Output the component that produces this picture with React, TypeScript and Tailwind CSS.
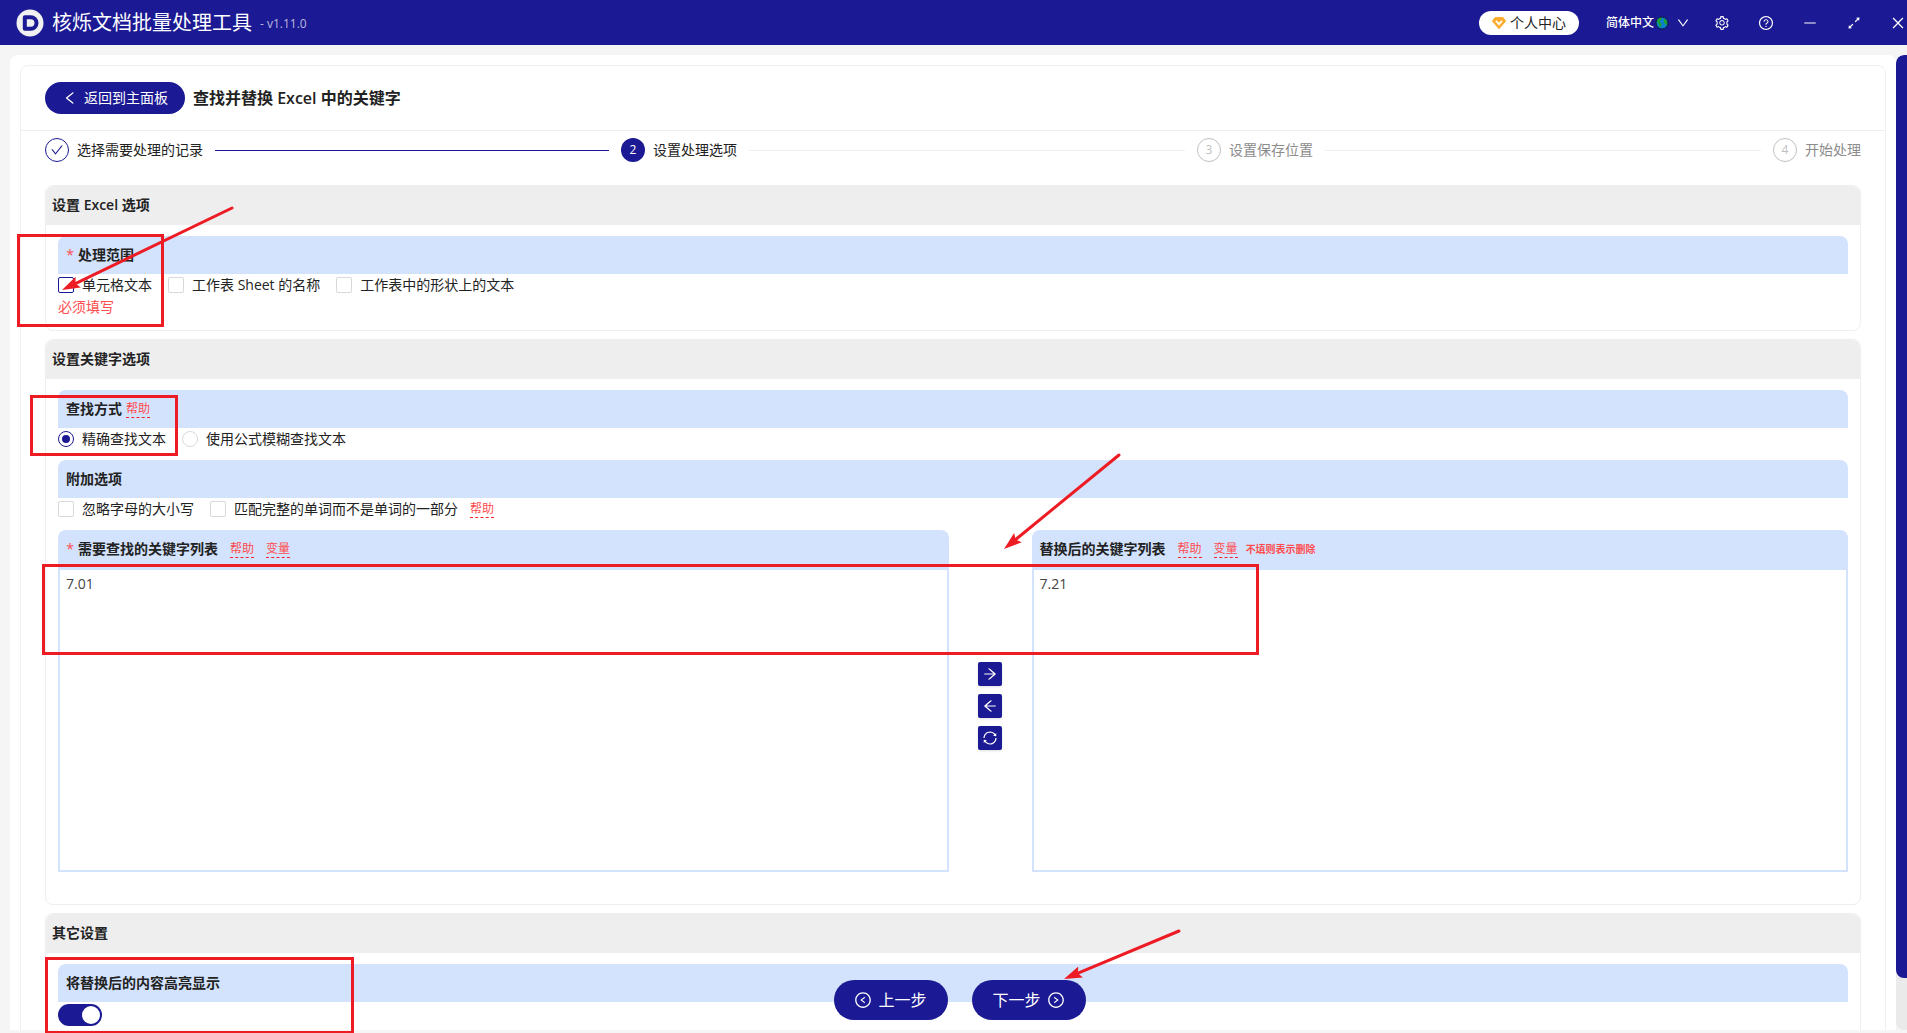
import { useState } from 'react';
import type { InputHTMLAttributes, ReactNode } from 'react';
import {
  AiOutlineArrowLeft,
  AiOutlineArrowRight,
  AiOutlineArrowsAlt,
  AiOutlineCheck,
  AiOutlineClose,
  AiOutlineDown,
  AiOutlineLeft,
  AiOutlineLeftCircle,
  AiOutlineMinus,
  AiOutlineQuestionCircle,
  AiOutlineRightCircle,
  AiOutlineSetting,
  AiOutlineSync,
} from 'react-icons/ai';

const steps = ['选择需要处理的记录', '设置处理选项', '设置保存位置', '开始处理'];
const currentStep = 1;

function Logo() {
  return (
    <svg viewBox="0 0 28 28" className="size-7" aria-hidden="true">
      <circle cx="14" cy="14" r="13.5" fill="#f0f0f0" />
      <path
        d="M8.8 8.3h6a5.7 5.7 0 0 1 0 11.4h-6z"
        fill="none"
        stroke="#1b1993"
        strokeWidth="4"
        strokeLinejoin="round"
      />
    </svg>
  );
}

function MemberIcon() {
  return (
    <svg viewBox="0 0 14 14" className="size-3.5" aria-hidden="true">
      <path d="M3 1.5h8l2.6 3.7L7 12.8.4 5.2z" fill="#fbac2e" stroke="#fbac2e" strokeLinejoin="round" />
      <path d="M4.4 5.4L7 8.2l2.6-2.8" fill="none" stroke="#fff" strokeWidth="1.7" strokeLinecap="round" />
    </svg>
  );
}

function GlobeIcon() {
  return (
    <svg viewBox="0 0 14 14" className="ml-px size-3.5" aria-hidden="true">
      <circle cx="7" cy="7" r="6" fill="#0b7fd0" stroke="#0a1f33" strokeWidth="1" />
      <path d="M2 4.2C3.4 2 5.4 1.4 6.8 1.8L6.4 3.6 4.6 5l.2 1.2 1.6 1 .2 1.6-1.4 2.8C4 11 4.4 9 3.2 7.6z" fill="#1fa32c" />
      <path d="M9.2 2.6l2.2 1.8.8 2.8-1.2 2.2-1.2-1.8-1.2-1.8z" fill="#1fa32c" />
    </svg>
  );
}

function TitleBar() {
  return (
    <header className="flex h-[45px] shrink-0 items-center justify-between bg-[#1b1993] pr-px pl-4 text-white">
      <div className="flex items-center">
        <Logo />
        <h1 className="ml-2 text-xl">核烁文档批量处理工具</h1>
        <span className="ml-2 pt-0.5 text-xs text-white/70">- v1.11.0</span>
      </div>
      <div className="flex items-center">
        <button className="flex h-6 w-[100px] items-center justify-center gap-1 rounded-full bg-white text-sm text-[#222]">
          <MemberIcon />
          个人中心
        </button>
        <button className="ml-[27px] flex items-center text-xs font-medium">
          简体中文
          <GlobeIcon />
          <AiOutlineDown className="ml-[7px] size-3.5" />
        </button>
        <div className="ml-6 flex items-center gap-7">
          <button aria-label="设置"><AiOutlineSetting className="size-4" /></button>
          <button aria-label="帮助"><AiOutlineQuestionCircle className="size-4" /></button>
          <button aria-label="最小化"><AiOutlineMinus className="size-4" /></button>
          <button aria-label="还原"><AiOutlineArrowsAlt className="size-4" /></button>
          <button aria-label="关闭"><AiOutlineClose className="size-4" /></button>
        </div>
      </div>
    </header>
  );
}

function StepMark({ index }: { index: number }) {
  if (index < currentStep) {
    return (
      <span className="flex size-6 items-center justify-center rounded-full border border-[#1b1993] text-[#1b1993]">
        <AiOutlineCheck className="size-3.5" />
      </span>
    );
  }
  return (
    <span
      className={`flex size-6 items-center justify-center rounded-full text-xs ${
        index === currentStep ? 'bg-[#1b1993] text-white' : 'border border-[#bfbfbf] text-[#bfbfbf]'
      }`}
    >
      {index + 1}
    </span>
  );
}

function Steps() {
  return (
    <ol className="flex text-sm">
      {steps.map((title, i) => {
        const last = i === steps.length - 1;
        return (
          <li key={title} className={`flex h-6 items-center ${last ? '' : 'flex-1 pr-3'}`}>
            <StepMark index={i} />
            <span className={`ml-2 ${i > currentStep ? 'text-[#8c8c8c]' : 'text-[#222]'}`}>{title}</span>
            {!last && (
              <span className={`ml-3 h-px flex-1 ${i < currentStep ? 'bg-[#1b1993]' : 'bg-[#f0f0f0]'}`} />
            )}
          </li>
        );
      })}
    </ol>
  );
}

function Section({ title, className = '', children }: { title: string; className?: string; children: ReactNode }) {
  return (
    <section className="rounded-lg border border-[#eee]">
      <h3 className="flex h-[39px] items-center rounded-t-lg bg-[#eee] px-1.5 pb-0.5 text-sm font-semibold">{title}</h3>
      <div className={`px-3 pt-[11px] ${className}`}>{children}</div>
    </section>
  );
}

function FieldBar({ children }: { children: ReactNode }) {
  return (
    <div className="flex h-[38px] items-center rounded-t-lg bg-[#d3e3fd] px-2 text-sm font-semibold">{children}</div>
  );
}

function Required() {
  return <span className="mr-1 w-2 text-center font-normal text-[#ff4d4f]">*</span>;
}

function HintLink({ className = '', children }: { className?: string; children: ReactNode }) {
  return (
    <a href="#" className={`border-b border-dashed border-[#f5222d] text-xs leading-4 font-normal text-[#ff4d4f] ${className}`}>
      {children}
    </a>
  );
}

interface OptionProps extends InputHTMLAttributes<HTMLInputElement> {
  label: string;
  active?: boolean;
}

function Checkbox({ label, active, ...rest }: OptionProps) {
  return (
    <label className="flex items-center gap-2">
      <input
        type="checkbox"
        className={`size-4 appearance-none rounded-xs border bg-white checked:bg-[#1b1993] ${
          active ? 'border-[#1b1993]' : 'border-[#d9d9d9]'
        }`}
        {...rest}
      />
      {label}
    </label>
  );
}

function Radio({ label, ...rest }: OptionProps) {
  return (
    <label className="flex items-center gap-2">
      <input
        type="radio"
        className="size-4 appearance-none rounded-full border border-[#d9d9d9] bg-white bg-clip-content p-[3px] checked:border-[#1b1993] checked:bg-[#1b1993]"
        {...rest}
      />
      {label}
    </label>
  );
}

function KeywordBox({ label, value, onChange }: { label: string; value: string; onChange: (v: string) => void }) {
  return (
    <textarea
      aria-label={label}
      value={value}
      onChange={(e) => onChange(e.target.value)}
      className="block h-[304px] w-full resize-none border-2 border-[#d3e3fd] bg-white px-1.5 py-1 text-sm text-[#444] outline-none"
    />
  );
}

function SquareButton({ label, onClick, children }: { label: string; onClick: () => void; children: ReactNode }) {
  return (
    <button
      aria-label={label}
      onClick={onClick}
      className="flex size-6 items-center justify-center rounded-xs bg-[#1b1993] text-white shadow-sm"
    >
      {children}
    </button>
  );
}

// hand-drawn guide marks laid over the whole window
function Annotations() {
  const boxes = [
    [18.5, 235.5, 144, 90],
    [31.5, 396.5, 145, 58],
    [43.5, 565.5, 1214, 88],
    [46.5, 958.5, 306, 74],
  ];
  const arrows = [
    [232, 208, 62, 290],
    [1119, 455, 1004, 549],
    [1179, 931, 1064, 979],
  ];
  return (
    <svg className="pointer-events-none absolute inset-0 size-full" aria-hidden="true">
      <defs>
        <marker id="head" markerUnits="userSpaceOnUse" markerWidth="20" markerHeight="14" refX="18" refY="7" orient="auto">
          <path d="M18 7L0 1l3 6-3 6z" fill="#ed1c24" />
        </marker>
      </defs>
      {boxes.map(([x, y, w, h]) => (
        <rect key={y} x={x} y={y} width={w} height={h} fill="none" stroke="#ed1c24" strokeWidth="3" />
      ))}
      {arrows.map(([x1, y1, x2, y2]) => {
        // the shaft stops inside the head so that the tip stays sharp
        const len = Math.hypot(x2 - x1, y2 - y1);
        const k = (len - 12) / len;
        return (
          <g key={x1} stroke="#ed1c24" strokeLinecap="round">
            <line x1={x1} y1={y1} x2={x1 + (x2 - x1) * k} y2={y1 + (y2 - y1) * k} strokeWidth="3" />
            <line x1={x1} y1={y1} x2={x2} y2={y2} strokeWidth="0" markerEnd="url(#head)" />
          </g>
        );
      })}
    </svg>
  );
}

export default function App() {
  const [mode, setMode] = useState('exact');
  const [search, setSearch] = useState('7.01');
  const [replacement, setReplacement] = useState('7.21');
  const [highlight, setHighlight] = useState(true);

  return (
    <div className="relative flex h-screen flex-col overflow-hidden bg-[#f5f5f5] font-['Open_Sans','Noto_Sans_CJK_SC',sans-serif] text-[#222]">
      <TitleBar />

      <div className="flex min-h-0 flex-1 pt-2.5 pb-[3px] pl-2.5">
        <main className="flex-1 overflow-hidden rounded-t-lg bg-white p-2.5">
          <div className="rounded-lg border border-[#f0f0f0]">
            <div className="flex h-[65px] items-center gap-2 border-b border-[#f0f0f0] px-6">
              <button className="flex h-8 w-[140px] items-center justify-center gap-1.5 rounded-full bg-[#1b1993] text-sm text-white">
                <AiOutlineLeft className="size-4" />
                返回到主面板
              </button>
              <h2 className="text-base font-semibold">查找并替换 Excel 中的关键字</h2>
            </div>

            <div className="px-6 pt-[7px] pb-6">
              <Steps />

              <div className="mt-[23px] flex flex-col gap-2 text-sm">
                <Section title="设置 Excel 选项" className="pb-3">
                  <FieldBar>
                    <Required />
                    处理范围
                  </FieldBar>
                  <div className="flex h-[22px] items-center gap-4">
                    <Checkbox label="单元格文本" active />
                    <Checkbox label="工作表 Sheet 的名称" />
                    <Checkbox label="工作表中的形状上的文本" />
                  </div>
                  <p className="h-[22px] leading-[22px] text-[#ff4d4f]">必须填写</p>
                </Section>

                <Section title="设置关键字选项" className="pb-8">
                  <FieldBar>
                    查找方式
                    <HintLink className="ml-1">帮助</HintLink>
                  </FieldBar>
                  <div className="flex h-[22px] items-center gap-4">
                    <Radio name="mode" label="精确查找文本" checked={mode === 'exact'} onChange={() => setMode('exact')} />
                    <Radio name="mode" label="使用公式模糊查找文本" checked={mode === 'fuzzy'} onChange={() => setMode('fuzzy')} />
                  </div>

                  <div className="mt-2.5">
                    <FieldBar>附加选项</FieldBar>
                    <div className="flex h-[22px] items-center gap-4">
                      <Checkbox label="忽略字母的大小写" />
                      <div className="flex items-center gap-3">
                        <Checkbox label="匹配完整的单词而不是单词的一部分" />
                        <HintLink>帮助</HintLink>
                      </div>
                    </div>
                  </div>

                  <div className="mt-2.5 grid grid-cols-[12fr_83px_11fr]">
                    <div>
                      <FieldBar>
                        <Required />
                        需要查找的关键字列表
                        <HintLink className="ml-3">帮助</HintLink>
                        <HintLink className="ml-3">变量</HintLink>
                      </FieldBar>
                      <KeywordBox label="需要查找的关键字列表" value={search} onChange={setSearch} />
                    </div>
                    <div className="flex flex-col items-center justify-center gap-2 pt-2.5">
                      <SquareButton label="复制到右侧" onClick={() => setReplacement(search)}>
                        <AiOutlineArrowRight className="size-4" />
                      </SquareButton>
                      <SquareButton label="复制到左侧" onClick={() => setSearch(replacement)}>
                        <AiOutlineArrowLeft className="size-4" />
                      </SquareButton>
                      <SquareButton
                        label="互换"
                        onClick={() => {
                          setSearch(replacement);
                          setReplacement(search);
                        }}
                      >
                        <AiOutlineSync className="size-4" />
                      </SquareButton>
                    </div>
                    <div>
                      <FieldBar>
                        替换后的关键字列表
                        <HintLink className="ml-3">帮助</HintLink>
                        <HintLink className="ml-3">变量</HintLink>
                        <span className="ml-2 text-[10px] text-[#ff4d4f]">不填则表示删除</span>
                      </FieldBar>
                      <KeywordBox label="替换后的关键字列表" value={replacement} onChange={setReplacement} />
                    </div>
                  </div>
                </Section>

                <Section title="其它设置" className="pb-8">
                  <FieldBar>将替换后的内容高亮显示</FieldBar>
                  <button
                    role="switch"
                    aria-checked={highlight}
                    aria-label="将替换后的内容高亮显示"
                    onClick={() => setHighlight(!highlight)}
                    className={`mt-0.5 flex h-[22px] w-11 items-center rounded-full p-0.5 ${
                      highlight ? 'justify-end bg-[#1b1993]' : 'bg-[#bfbfbf]'
                    }`}
                  >
                    <span className="size-[18px] rounded-full bg-white" />
                  </button>
                </Section>
              </div>
            </div>
          </div>
        </main>

        <div className="w-[11px] overflow-hidden rounded-l-lg bg-[#eaeaea]">
          <div className="h-[94.7%] rounded-l-lg bg-[#1b1993]" />
        </div>
      </div>

      <div className="absolute inset-x-0 bottom-[13px] flex justify-center gap-6 pl-3">
        <button className="flex h-10 w-[114px] items-center justify-center gap-1.5 rounded-full bg-[#1b1993] text-base text-white">
          <AiOutlineLeftCircle className="size-[18px]" />
          上一步
        </button>
        <button className="flex h-10 w-[114px] items-center justify-center gap-1.5 rounded-full bg-[#1b1993] text-base text-white">
          下一步
          <AiOutlineRightCircle className="size-[18px]" />
        </button>
      </div>

      <Annotations />
    </div>
  );
}
